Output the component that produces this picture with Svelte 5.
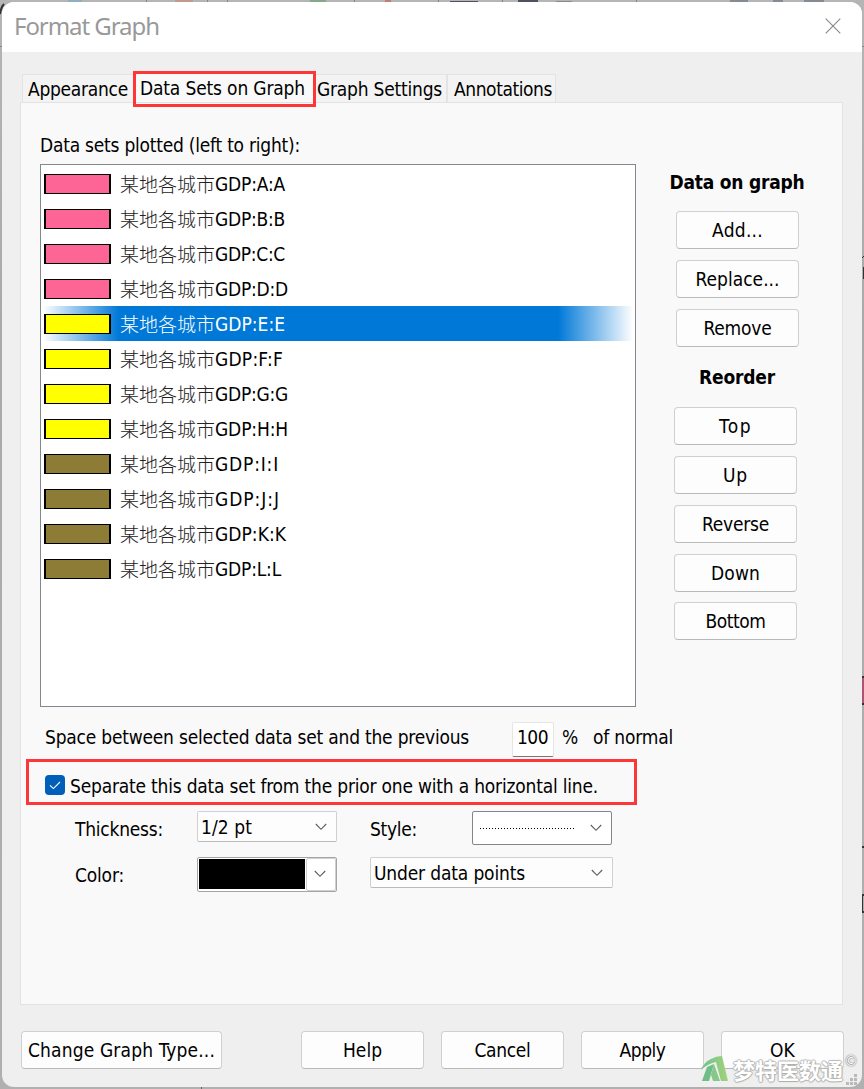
<script>
  const tabs = [
    { label: 'Appearance', w: 100, cls: 'first' },
    { label: 'Data Sets on Graph', w: 165, cls: 'active' },
    { label: 'Graph Settings', w: 125, cls: 'third' },
    { label: 'Annotations', w: 98, cls: 'last' }
  ];
  const pink = '#fc6595', yellow = '#ffff00', olive = '#8c7c35';
  const rows = [
    ['A', pink, 70], ['B', pink, 70], ['C', pink, 70], ['D', pink, 73],
    ['E', yellow, 70], ['F', yellow, 68], ['G', yellow, 73], ['H', yellow, 73],
    ['I', olive, 64], ['J', olive, 65], ['K', olive, 71], ['L', olive, 66]
  ];
  const edit = [['Add...', 51], ['Replace...', 84], ['Remove', 68]];
  const order = [['Top', 33], ['Up', 25], ['Reverse', 67], ['Down', 49], ['Bottom', 60]];
  const actions = [['Help', 39], ['Cancel', 56], ['Apply', 46], ['OK', 25]];

  // Spreads a label over the given width by adjusting its tracking.
  function fit(node, width) {
    const natural = node.getBoundingClientRect().width;
    node.style.letterSpacing = (width - natural) / [...node.textContent].length + 'px';
  }
</script>

{#snippet chevron()}
  <svg class="chevron" width="12" height="8" viewBox="0 0 12 8"><path d="M.8 1 6 6.3 11.2 1" fill="none" stroke="#5c5c5c" stroke-width="1.1" /></svg>
{/snippet}

<div class="backdrop">
  <svg class="behind" width="864" height="1089" viewBox="0 0 864 1089">
    <path d="M0 46.500H864M146.500 0V3M207.500 0V3M227.500 0V3M354.500 0V3M438.500 0V3M502.500 0V3M636.500 0V3" stroke="#858585" fill="none" />
    <path d="M68 0h14v2H68z" fill="#8eb0bf" /><path d="M175 0h18v2h-18z" fill="#c2998f" />
    <path d="M310 0h16v2h-16z" fill="#83a98d" /><path d="M385 0h6v2h-6z" fill="#c77b70" />
    <path d="M450 1h28v1h-28zM518 0h20v2h-20z" fill="#4c535f" /><path d="M556 1h16v1h-16zM730 0h18v2h-18zM773 0h10v2h-10zM804 0h20v2h-20z" fill="#858b92" />
    <path d="M0 14Q1 7 4 4" stroke="#333" fill="none" stroke-width="2" />
    <path d="M862 676h2v28h-2z" fill="#ad5473" /><path d="M862 677h2M862 704h2M862 847h2M862 895h2M862 912h2" stroke="#333" stroke-width="2" />
    <path d="M862.500 894v19" stroke="#333" /><path d="M862 258l2-2M863.500 267v12" stroke="#333" />
    <path d="M201.500 1087v2" stroke="#666" />
  </svg>
  <section class="dialog">
    <header>
      <h1><span use:fit={145}>Format Graph</span></h1>
      <svg class="close" width="16" height="16" viewBox="0 0 16 16"><path d="M.7.700 15.300 15.300M15.300.700.7 15.300" fill="none" stroke="#8b8b8b" stroke-width="1.200" /></svg>
    </header>

    <nav>
      {#each tabs as t}
        <div class="tab {t.cls}"><span use:fit={t.w}>{t.label}</span></div>
      {/each}
      <div class="mark"></div>
    </nav>

    <main>
      <div class="upper">
        <div class="sets">
          <div class="caption"><span use:fit={260}>Data sets plotted (left to right):</span></div>
          <div class="list">
            {#each rows as [id, color, w]}
              <div class="row" class:selected={id === 'E'}>
                <i style:background={color}></i>
                <span class="city">某地各城市</span><span use:fit={w}>GDP:{id}:{id}</span>
              </div>
            {/each}
          </div>
        </div>
        <aside>
          <h2><span use:fit={135}>Data on graph</span></h2>
          <div class="stack">
            {#each edit as [label, w]}<button><span use:fit={w}>{label}</span></button>{/each}
          </div>
          <h2><span use:fit={76}>Reorder</span></h2>
          <div class="stack order">
            {#each order as [label, w]}<button><span use:fit={w}>{label}</span></button>{/each}
          </div>
        </aside>
      </div>

      <div class="space">
        <span class="lead"><span use:fit={424}>Space between selected data set and the previous</span></span>
        <div class="number"><span use:fit={31}>100</span></div>
        <span class="pct"><span use:fit={19}>%</span></span>
        <span use:fit={80}>of normal</span>
      </div>

      <div class="separate">
        <div class="check"><svg width="12" height="9" viewBox="0 0 12 9"><path d="M1 4.300 4.400 7.600 11 1" fill="none" stroke="#fff" stroke-width="1.100" /></svg></div>
        <span use:fit={528}>Separate this data set from the prior one with a horizontal line.</span>
      </div>

      <div class="options">
        <label for="thick"><span use:fit={88}>Thickness:</span></label>
        <div class="combo thick" id="thick"><span use:fit={51}>1/2 pt</span>{@render chevron()}</div>
        <label for="style"><span use:fit={47}>Style:</span></label>
        <div class="combo style" id="style"><div class="dots"></div>{@render chevron()}</div>
      </div>
      <div class="options second">
        <label for="color"><span use:fit={49}>Color:</span></label>
        <div class="combo color" id="color"><div class="ink"></div><div class="drop">{@render chevron()}</div></div>
        <div class="combo place"><span use:fit={151}>Under data points</span>{@render chevron()}</div>
      </div>
    </main>

    <footer>
      <button class="wide"><span use:fit={187}>Change Graph Type...</span></button>
      {#each actions as [label, w]}<button><span use:fit={w}>{label}</span></button>{/each}
    </footer>
    <svg class="grip" width="12" height="12" viewBox="0 0 12 12"><path d="M8 0h3v3H8zM4 4h3v3H4zM8 4h3v3H8zM0 8h3v3H0zM4 8h3v3H4zM8 8h3v3H8z" fill="#b9b9b9" /></svg>
  </section>

  <div class="watermark">
    <svg width="29" height="28" viewBox="0 0 29 28">
      <defs><linearGradient id="leaf" x1="0" x2="1"><stop offset="0" stop-color="#6cc48c" /><stop offset="1" stop-color="#a3d17c" /></linearGradient></defs>
      <path d="M0 15Q3 7 10 4Q15 1 21 1L27 26H20L15 7Q6 9 0 15Z" fill="url(#leaf)" />
      <path d="M6 12 13 9 8 26H1Z" fill="#6fbd87" /><path d="M13 9 19 26H12L10 20Z" fill="#86c78a" />
    </svg>
    <b>梦特医数通</b><em>©</em>
  </div>
</div>

<style>
  :global(body) { margin: 0; background: #aaa; }
  * { box-sizing: border-box; }
  .backdrop { position: relative; width: 864px; height: 1089px; padding: 2px; overflow: hidden; background: linear-gradient(#b5b5b5, #a9a9a9 30%, #b0b0b0); font: 19px/24px "DejaVu Sans Condensed", "DejaVu Sans", "Noto Sans CJK SC", sans-serif; font-stretch: condensed; color: #000; }
  .behind { position: absolute; left: 0; top: 0; }
  span { white-space: pre; }
  .dialog { position: relative; width: 860px; height: 1085px; border-radius: 12px; overflow: hidden; background: #efefef; display: flex; flex-direction: column; }
  header { height: 50px; flex: none; background: #fff; display: flex; justify-content: space-between; align-items: center; padding: 0 21px 2px 12px; }
  h1 { margin: 0; font: 400 24px/32px "Noto Sans", "Open Sans", sans-serif; color: #999; }
  .close { display: block; }
  nav { position: relative; height: 50px; flex: none; display: flex; align-items: flex-end; padding-left: 20px; }
  .tab { height: 28px; border: 1px solid #e3e3e3; border-bottom: 0; background: #f3f3f3; padding: 2px 0 0 5px; }
  .first { width: 112px; }
  .active { width: 181px; height: 30px; background: #f9f9f9; padding-top: 3px; }
  .third { width: 132px; padding-left: 1px; }
  .last { width: 109px; padding-left: 6px; }
  .mark { position: absolute; left: 131px; top: 19px; width: 183px; height: 36px; border: 3px solid #fd3737; z-index: 2; }
  main { margin-left: 18px; width: 823px; height: 903px; flex: none; border: 1px solid #e3e3e3; background: #f9f9f9; padding: 30px 0 0 5px; }
  .upper { display: flex; }
  .sets { margin-left: 14px; width: 596px; }
  .caption { height: 31px; }
  .list { height: 543px; border: 1px solid #828790; background: #fff; padding: 1px 2px; }
  .row { height: 35px; display: flex; align-items: center; padding-left: 1px; }
  .row i { width: 67px; height: 20px; border: solid #000; border-width: 1px 2px; margin-right: 9px; }
  .city { width: 95px; font: 300 19px/24px "Noto Sans CJK SC", sans-serif; color: #222; }
  .selected { background: linear-gradient(90deg, #fff 0, #0078d7 76px, #0078d7 515px, #fff 100%); color: #fff; }
  .selected .city { color: #fff; }
  aside { margin-left: 33px; width: 137px; padding-top: 37px; }
  h2 { margin: 0; font-size: 19px; line-height: 24px; font-weight: 700; text-align: center; height: 41px; padding-right: 1px; }
  .stack { display: flex; flex-direction: column; gap: 11px; margin-left: 7px; }
  .stack + h2 { margin-top: 18px; height: 42px; }
  .order { margin-left: 5px; }
  .order button:last-child { margin-top: -1px; }
  button { width: 123px; height: 38px; flex: none; padding: 0; border: 1px solid #d0d0d0; border-bottom-color: #b9b9b9; border-radius: 4px; background: #fdfdfd; color: #000; font: inherit; text-align: center; }
  .space { display: flex; align-items: center; height: 35px; margin-top: 15px; padding-left: 19px; }
  .lead { width: 467px; padding-bottom: 5px; }
  .number { width: 42px; height: 35px; border: 1px solid #e5e5e5; border-bottom-color: #777; border-radius: 2px; background: #fff; padding: 2px 0 0 4px; }
  .pct { width: 31px; margin-left: 8px; }
  .pct, .space > span:last-child { padding-bottom: 5px; }
  .separate { margin-top: 2px; width: 611px; height: 46px; border: 3px solid #fd3737; display: flex; align-items: center; padding: 8px 0 0 16px; }
  .check { width: 20px; height: 20px; margin: -2px 5px 0 0; border-radius: 4px; background: #005fb8; display: grid; place-items: center; }
  .options { display: flex; align-items: flex-start; margin-top: 6px; height: 35px; padding-left: 49px; }
  .options.second { margin-top: 11px; }
  label { width: 122px; padding-top: 6px; }
  .combo + label { width: 102px; margin-left: 33px; }
  .combo { display: flex; align-items: center; justify-content: space-between; height: 31px; border: 1px solid #d0d0d0; border-bottom-color: #bababa; border-radius: 2px; background: #fdfdfd; padding: 0 9px 0 3px; }
  .thick, .style, .color { width: 140px; }
  .style { height: 34px; border-color: #858585; background: #fff; padding-left: 7px; }
  .dots { width: 95px; height: 1px; background: repeating-linear-gradient(90deg, #000 0 1px, transparent 1px 3px); }
  .color { height: 35px; border-color: #a5a5a5; background: #fff; padding: 1px 0 1px 1px; }
  .ink { width: 106px; height: 30px; margin-top: -1px; background: #000; }
  .drop { width: 30px; height: 33px; border: 1px solid #d0d0d0; border-radius: 2px; display: grid; place-items: center; padding: 0 3px 2px 0; }
  .place { margin-left: 33px; width: 243px; }
  footer { display: flex; margin: 26px 0 0 19px; gap: 17px; }
  .wide { width: 201px; margin-right: 62px; }
  .grip { position: absolute; right: 4px; bottom: 1px; }
  .watermark { position: absolute; left: 701px; top: 1055px; display: flex; align-items: flex-start; font-family: "Noto Sans CJK SC", sans-serif; }
  .watermark b { margin-left: 3px; font-size: 22px; line-height: 28px; font-weight: 700; color: #fff; text-shadow: 1px 0 1px #aaa, -1px 0 1px #bbb, 0 1px 1px #aaa, 0 -1px 1px #bbb; white-space: nowrap; }
  .watermark em { font: 14px/16px "DejaVu Sans"; color: #fff; text-shadow: 0 0 1px #777, 0 0 2px #777; margin: -2px 0 0 1px; }
</style>
